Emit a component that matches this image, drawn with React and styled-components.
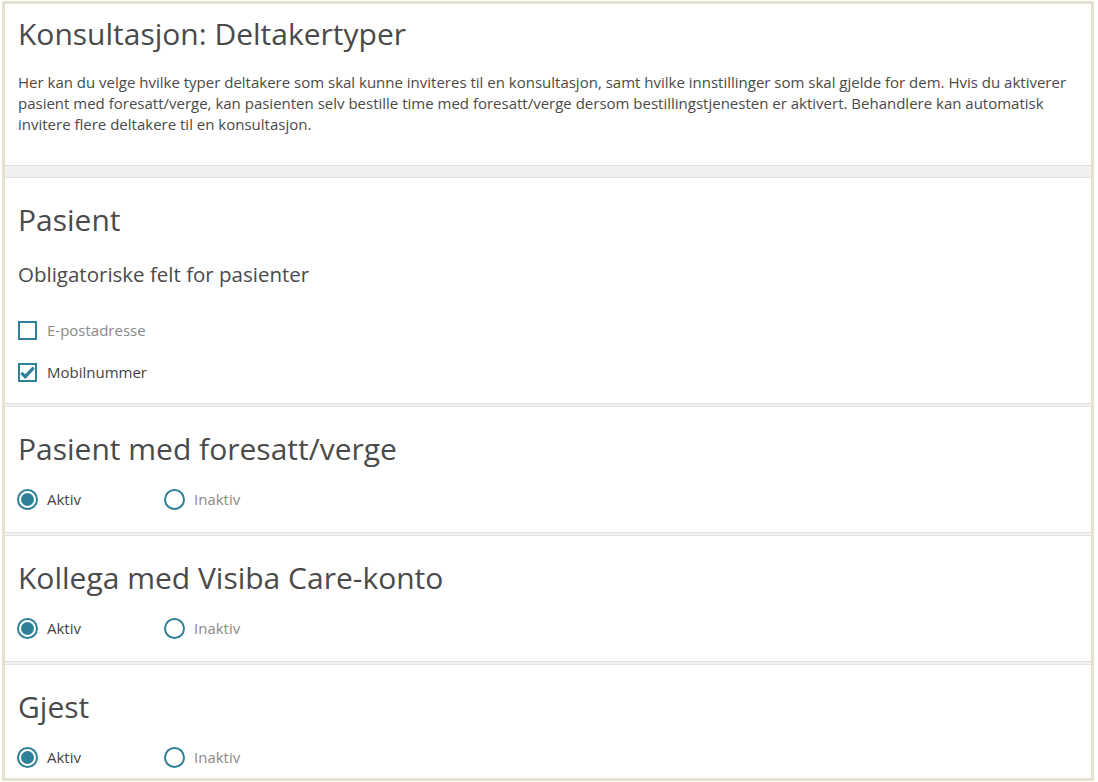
import styled, { createGlobalStyle } from "styled-components";

const GlobalStyle = createGlobalStyle`
  body {
    margin: 1px 4px 0 2px;
    font-family: "Source Sans Pro", "Open Sans", sans-serif;
    background: #ffffff;
    color: #444;
  }
`;

const TEAL = "#2f8199";

const Frame = styled.div`
  border: 3px solid #e5e2d1;
  background: #f0f0f0;
  height: 774px;
  overflow: hidden;
  display: flex;
  flex-direction: column;

  & > * {
    flex-shrink: 0;
  }
`;

const Header = styled.section`
  background: #fff;
  padding: 11px 12px 30px 13px;
  border-bottom: 1px solid #e2e2e2;
`;

const Title = styled.h1`
  margin: 0 0 19px;
  font-size: 30px;
  font-weight: 400;
  line-height: 38px;
  color: #4a4a4a;
`;

const Intro = styled.p`
  margin: 0;
  font-size: 15px;
  line-height: 21px;
  color: #4a4a4a;
`;

const Band = styled.div`
  height: 11px;
`;

const Card = styled.section`
  background: #fff;
  border-top: 1px solid #e2e2e2;
  border-bottom: 1px solid #e2e2e2;
  padding: ${(p) => p.$pad || "22px 16px 16px 13px"};
  margin-bottom: 2px;
`;

const Heading = styled.h2`
  margin: 0;
  font-size: 30px;
  font-weight: 400;
  line-height: 36px;
  color: #4a4a4a;
`;

const SubHeading = styled.h3`
  margin: 24px 0 33px;
  font-size: 20.5px;
  font-weight: 400;
  line-height: 24px;
  color: #4a4a4a;
`;

const CheckList = styled.div`
  display: flex;
  flex-direction: column;
  gap: 20px;
`;

const OptionRow = styled.div`
  display: flex;
  align-items: center;
  margin-top: ${(p) => p.$top || "0"};
`;

const Option = styled.label`
  display: flex;
  align-items: center;
  gap: 9px;
  width: ${(p) => p.$width || "auto"};
  font-size: 15px;
  line-height: 22px;
  color: ${(p) => (p.$on ? "#444" : "#8a8a8a")};
`;

const Box = styled.span`
  width: 19px;
  height: 19px;
  box-sizing: border-box;
  border: 2px solid ${TEAL};
  display: flex;
  align-items: center;
  justify-content: center;
  margin-right: 1px;
`;

const Radio = styled.span`
  width: 21px;
  height: 21px;
  box-sizing: border-box;
  border-radius: 50%;
  border: 2px solid ${TEAL};
  display: flex;
  align-items: center;
  justify-content: center;
  margin-left: -1px;

  &::after {
    content: "";
    width: 13px;
    height: 13px;
    border-radius: 50%;
    background: ${(p) => (p.$on ? TEAL : "transparent")};
  }
`;

const Check = ({ on, children }) => (
  <Option $on={on}>
    <Box>
      {on && (
        <svg width="17" height="15" viewBox="0 0 17 15">
          <path d="M1.5 8 L6 12.2 L15.5 2" fill="none" stroke={TEAL} strokeWidth="3.6" />
        </svg>
      )}
    </Box>
    {children}
  </Option>
);

const RadioGroup = ({ active = true }) => (
  <OptionRow $top="21px">
    <Option $on={active} $width="147px">
      <Radio $on={active} />
      Aktiv
    </Option>
    <Option $on={!active}>
      <Radio $on={!active} />
      Inaktiv
    </Option>
  </OptionRow>
);

const types = ["Pasient med foresatt/verge", "Kollega med Visiba Care-konto", "Gjest"];

export default function App() {
  return (
    <>
      <GlobalStyle />
      <Frame>
        <Header>
          <Title>Konsultasjon: Deltakertyper</Title>
          <Intro>
            Her kan du velge hvilke typer deltakere som skal kunne inviteres til en konsultasjon, samt hvilke
            innstillinger som skal gjelde for dem. Hvis du aktiverer pasient med foresatt/verge, kan pasienten selv
            bestille time med foresatt/verge dersom bestillingstjenesten er aktivert. Behandlere kan automatisk
            invitere flere deltakere til en konsultasjon.
          </Intro>
        </Header>
        <Band />
        <Card $pad="24px 16px 20px 13px">
          <Heading>Pasient</Heading>
          <SubHeading>Obligatoriske felt for pasienter</SubHeading>
          <CheckList>
            <Check on={false}>E-postadresse</Check>
            <Check on>Mobilnummer</Check>
          </CheckList>
        </Card>
        {types.map((t) => (
          <Card key={t} $pad="24px 16px 22px 13px">
            <Heading>{t}</Heading>
            <RadioGroup />
          </Card>
        ))}
      </Frame>
    </>
  );
}
